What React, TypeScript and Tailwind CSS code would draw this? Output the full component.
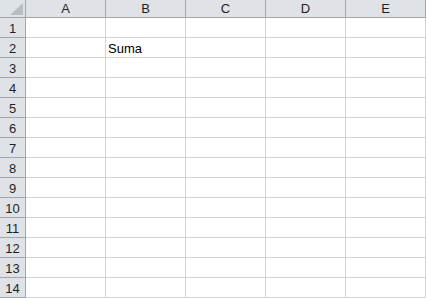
import React from "react";

const columns = ["A", "B", "C", "D", "E"];
const rows = Array.from({ length: 14 }, (_, i) => i + 1);

const cellText: Record<string, string> = {
    B2: "Suma",
};

const App: React.FC = () => {
    return (
        <div
            className="w-[427px] h-[298px] overflow-hidden bg-white text-[#1f1f1f]"
            style={{ fontFamily: "'Liberation Sans', Arial, sans-serif" }}
        >
            <div className="grid grid-cols-[26px_repeat(5,80px)] grid-rows-[18px_repeat(14,20px)]">
                {/* corner */}
                <div className="relative bg-[#dfe3e8] border-r border-b border-[#9ea6ae]">
                    <svg className="absolute left-[10px] top-[3px]" width="13" height="12" viewBox="0 0 13 12">
                        <polygon points="13,0 13,12 0,12" fill="#b8bdc3" />
                    </svg>
                </div>
                {columns.map(col => (
                    <div
                        key={col}
                        className="flex items-center justify-center bg-[#dfe3e8] border-r border-b border-[#9ea6ae] text-[13px] leading-none"
                    >
                        {col}
                    </div>
                ))}

                {rows.map(row => (
                    <React.Fragment key={row}>
                        <div className="flex items-end justify-center pb-[2px] bg-[#dfe3e8] border-r border-b border-[#9ea6ae] text-[13px] leading-none">
                            {row}
                        </div>
                        {columns.map(col => (
                            <div
                                key={col + row}
                                className="flex items-end pl-[2px] pb-[2px] border-r border-b border-[#d4d4d4] text-[13px] leading-none text-black whitespace-nowrap"
                            >
                                {cellText[col + row]}
                            </div>
                        ))}
                    </React.Fragment>
                ))}
            </div>
        </div>
    );
};

export default App;
